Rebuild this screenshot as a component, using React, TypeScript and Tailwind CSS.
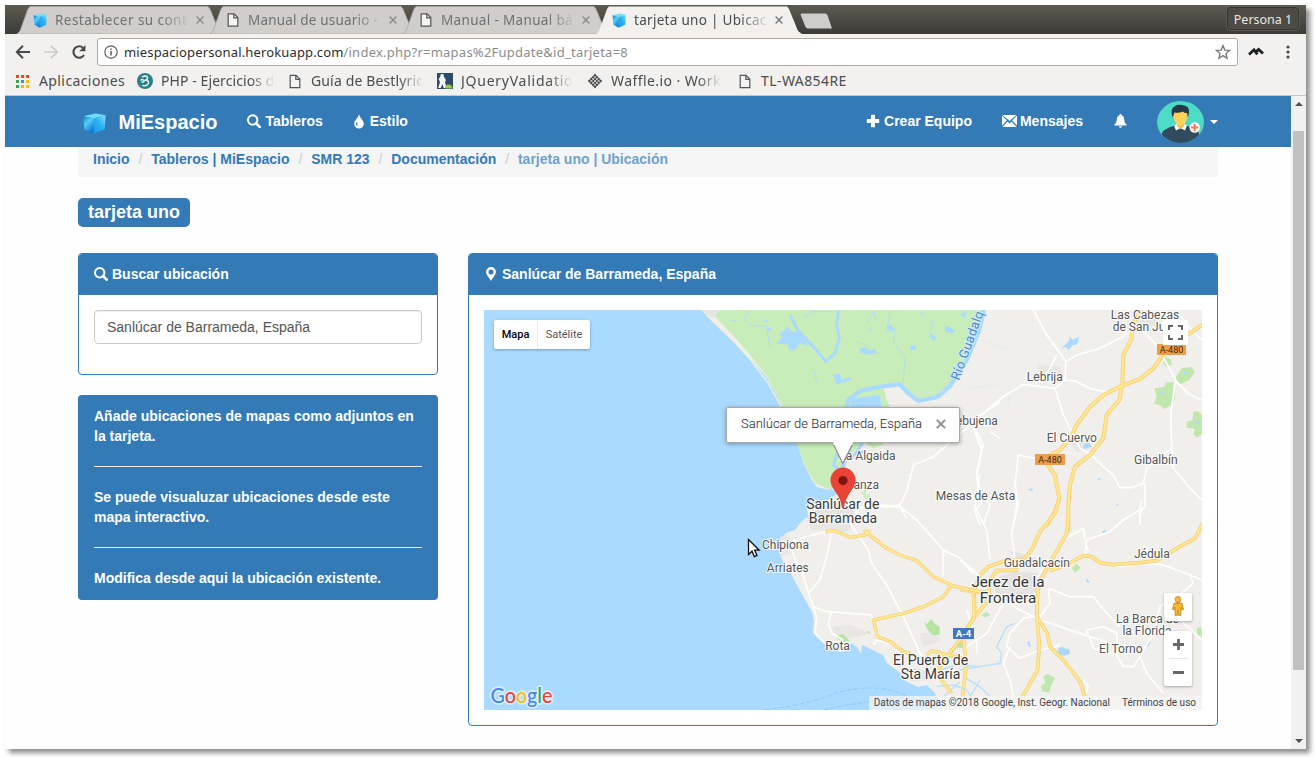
import React from "react";

const SANS = "font-['Liberation_Sans',Arial,sans-serif]";

/* ---------- icons ---------- */

const CubeIcon = ({ className }: { className?: string }) => (
  <svg viewBox="0 0 16 16" preserveAspectRatio="none" className={className}>
    <defs>
      <linearGradient id="cube-left" x1="0" y1="0" x2="0.6" y2="1">
        <stop offset="0" stopColor="#1d74cf" />
        <stop offset="0.45" stopColor="#4fd0f7" />
        <stop offset="1" stopColor="#1272d6" />
      </linearGradient>
      <linearGradient id="cube-right" x1="1" y1="0" x2="0.2" y2="1">
        <stop offset="0" stopColor="#8ae4fc" />
        <stop offset="0.5" stopColor="#2bb3f3" />
        <stop offset="1" stopColor="#1c9df0" />
      </linearGradient>
    </defs>
    <path d="M.6 2.4 9 .4 15.7 1.8 8 4Z" fill="#6fdcfb" />
    <path d="M.6 2.4 8 4 7.8 15.7 1.6 12.6Z" fill="url(#cube-left)" />
    <path d="M8 4 15.7 1.8 15.2 12.4 7.8 15.7Z" fill="url(#cube-right)" />
  </svg>
);

const PageIcon = ({ className }: { className?: string }) => (
  <svg viewBox="0 0 12 14" className={className} fill="none" stroke="#555" strokeWidth="1.2">
    <path d="M1.2.8H7L10.8 4.6V13.2H1.2Z" fill="#f4f4f3" />
    <path d="M6.8.8V4.8H10.8" />
  </svg>
);

const CloseIcon = ({ className }: { className?: string }) => (
  <svg viewBox="0 0 8 8" className={className} stroke="currentColor" strokeWidth="1.4">
    <path d="M.6.6 7.4 7.4M7.4.6.6 7.4" />
  </svg>
);

const SearchIcon = ({ className }: { className?: string }) => (
  <svg viewBox="0 0 14 14" className={className} fill="none" stroke="#fff">
    <circle cx="5.7" cy="5.7" r="4.7" strokeWidth="2" />
    <path d="M9 9 12.7 12.7" strokeWidth="2.6" strokeLinecap="round" />
  </svg>
);

const TintIcon = () => (
  <svg viewBox="0 0 12 15" className="h-[15px] w-3">
    <path d="M6 .3C6.8 4 10.8 6.2 10.8 9.8A4.8 4.8 0 0 1 1.2 9.8C1.2 6.2 5.3 4 6 .3Z" fill="#fff" />
    <path d="M3.2 8.6C2.6 10.6 3.6 12 5.2 12.2 4 11.2 4.2 9.8 4.6 8.2Z" fill="#337ab7" />
  </svg>
);

const PlusIcon = () => (
  <svg viewBox="0 0 14 14" className="h-3.5 w-3.5">
    <path d="M5 .8H9V5H13.2V9H9V13.2H5V9H.8V5H5Z" fill="#fff" />
  </svg>
);

const MailIcon = () => (
  <svg viewBox="0 0 15 12" className="h-3 w-[15px]" fill="#fff">
    <path d="M.6 0H14.4L7.5 6Z" />
    <path d="M0 .6 4.8 5.4 0 10.6ZM15 .6 10.2 5.4 15 10.6Z" />
    <path d="M.4 12 5.5 6.6 7.5 8.4 9.5 6.6 14.6 12Z" />
  </svg>
);

const BellIcon = () => (
  <svg viewBox="0 0 13 14" className="h-3.5 w-[13px]" fill="#fff">
    <path d="M6.5 0C7.2 0 7.6.5 7.6 1.2 9.6 1.8 10 3.6 10.2 5.6 10.4 8 11 9.4 12.6 10.6V11.6H.4V10.6C2 9.4 2.6 8 2.8 5.6 3 3.6 3.4 1.8 5.4 1.2 5.4.5 5.8 0 6.5 0Z" />
    <path d="M5 12.2H8A1.5 1.5 0 0 1 5 12.2Z" />
  </svg>
);

const MarkerIcon = () => (
  <svg viewBox="0 0 10 14" className="h-3.5 w-2.5">
    <path
      d="M5 0A4.9 4.9 0 0 1 9.9 4.9C9.9 7.8 6.8 10 5 14 3.2 10 .1 7.8.1 4.9A4.9 4.9 0 0 1 5 0ZM5 2.4A2.5 2.5 0 1 0 5 7.4 2.5 2.5 0 0 0 5 2.4Z"
      fill="#fff"
      fillRule="evenodd"
    />
  </svg>
);

const Avatar = () => (
  <svg viewBox="0 0 47 42" className="h-[42px] w-[47px]">
    <defs>
      <clipPath id="avatar-clip">
        <ellipse cx="23.5" cy="21" rx="23.5" ry="21" />
      </clipPath>
    </defs>
    <g clipPath="url(#avatar-clip)">
      <rect width="47" height="42" fill="#4cdbc4" />
      <path d="M5 42V32Q6 28 18 24.5L23.5 28 29 24.5Q41 28 42 32V42Z" fill="#324a5e" />
      <path d="M17 24.5 20 22.5H27L30 24.5 28 29.5 23.5 27 19 29.5Z" fill="#fff" />
      <path d="M20 20H27V25L23.5 28 20 25Z" fill="#fdb62f" />
      <path d="M16.8 11Q23 12 26 9L30.2 12V17Q29 23 23.5 25.5 18 23 16.8 17Z" fill="#ffd05b" />
      <path d="M15.5 16.5Q12.5 7.5 18 5 20 3.4 25 4 32.5 4.5 32 11 31.5 14 31 16.5L30 12Q27.5 12.5 26 10.5 22 12.5 17.5 11.5Z" fill="#263a4c" />
    </g>
    <circle cx="37.7" cy="26.5" r="5.2" fill="#fff" />
    <path d="M37.7 22.8V30.2M34 26.5H41.4" stroke="#ff7058" strokeWidth="1.9" />
  </svg>
);

/* ---------- browser chrome ---------- */

const TABS = [
  { title: "Restablecer su cont", cube: true, active: false, track: "tracking-[0.45px]" },
  { title: "Manual de usuario -", cube: false, active: false, track: "tracking-[0.18px]" },
  { title: "Manual - Manual bá", cube: false, active: false, track: "tracking-[0.34px]" },
  { title: "tarjeta uno | Ubicac", cube: true, active: true, track: "tracking-[0.3px]" },
];

const Tab = ({ tab }: { tab: (typeof TABS)[number] }) => (
  <div className={"relative -mr-[13px] flex h-[28px] w-[206px] shrink-0 items-center pl-[15px] " + (tab.active ? "z-10" : "")}>
    <svg viewBox="0 0 206 28" className="absolute inset-0 h-[28px] w-[206px]">
      <path
        d="M0 28 3 25 11 3 13 .5H191L193 3 202 25 206 28Z"
        fill={tab.active ? "#f2f1f0" : "#d0cecc"}
        stroke={tab.active ? "none" : "#a9a7a4"}
        strokeWidth=".8"
      />
    </svg>
    <div className="relative flex w-4 justify-center">
      {tab.cube ? <CubeIcon className="mr-px h-[15px] w-[14px]" /> : <PageIcon className="h-[14px] w-3" />}
    </div>
    <div
      className={
        "relative ml-[7px] w-[136px] overflow-hidden whitespace-nowrap font-['Noto_Sans',sans-serif] text-[13.5px] leading-5 [mask-image:linear-gradient(to_right,black_78%,transparent_100%)] " +
        tab.track +
        (tab.active ? " text-[#4c4c4c]" : " text-[#717070]")
      }
    >
      {tab.title}
    </div>
    <CloseIcon className={"relative ml-[5px] h-2 w-2 " + (tab.active ? "text-[#777]" : "text-[#8d8c8b]")} />
  </div>
);

const TabStrip = () => (
  <div className="flex h-[29px] items-end bg-gradient-to-b from-[#5d5b51] to-[#3c3b37] pl-3">
    {TABS.map((t) => (
      <Tab key={t.title} tab={t} />
    ))}
    <svg viewBox="0 0 34 16" className="mb-[5px] ml-[10px] h-4 w-[34px] self-end">
      <path d="M2.5.6H26Q28 .6 28.6 2.4L33 15.4H8.5Q7 15.4 6.3 13.6L1.6 1.6Q1.6.6 2.5.6Z" fill="#cfcdcb" />
    </svg>
    <div className="ml-auto mr-[7px] mt-[2px] flex h-[23px] w-[72px] items-center justify-center self-start rounded-[4px] border border-[#36352f] bg-[#4d4b45] pt-[3px] font-['Noto_Sans',sans-serif] text-[12.5px] text-[#ebe9e4] shadow-[0_0_0_1px_#5c5a52]">
      Persona 1
    </div>
  </div>
);

const AddressBar = () => (
  <div className="flex h-9 items-center bg-[#f2f1f0] pl-[10px]">
    <svg viewBox="0 0 16 16" className="h-4 w-4" fill="none" stroke="#4a4a4a" strokeWidth="2">
      <path d="M15 8H2.4M8 1.8 1.8 8 8 14.2" />
    </svg>
    <svg viewBox="0 0 16 16" className="ml-[12px] h-4 w-4" fill="none" stroke="#cbcac9" strokeWidth="1.7">
      <path d="M1 8H13.6M8 1.8 14.2 8 8 14.2" />
    </svg>
    <svg viewBox="0 0 16 16" className="ml-[12px] h-4 w-4" fill="none" stroke="#4a4a4a" strokeWidth="2.1">
      <path d="M13 11A5.7 5.7 0 1 1 12.2 4" />
      <path d="M14.4 1V7.2H8.2Z" fill="#4a4a4a" stroke="none" />
    </svg>
    <div className="ml-[10px] flex h-7 w-[1141px] items-center rounded-[3px] border border-[#aeacaa] bg-white px-[6px]">
      <svg viewBox="0 0 14 14" className="h-3.5 w-3.5" fill="none" stroke="#5f5f5f" strokeWidth="1.2">
        <circle cx="7" cy="7" r="6.2" />
        <path d="M7 6V10.6M7 3.4V5" strokeWidth="1.5" />
      </svg>
      <div className="ml-[6px] whitespace-nowrap font-['Noto_Sans',sans-serif] text-[13px] leading-5">
        <span className="tracking-[0.14px] text-[#2d2d2d]">miespaciopersonal.herokuapp.com</span>
        <span className="tracking-[0.24px] text-[#8c8c8c]">/index.php?r=mapas%2Fupdate&amp;id_tarjeta=8</span>
      </div>
      <svg viewBox="0 0 16 16" className="ml-auto h-4 w-4" fill="none" stroke="#777" strokeWidth="1.3">
        <path d="M8 1.6 9.8 6.1 14.6 6.4 10.9 9.5 12.1 14.2 8 11.6 3.9 14.2 5.1 9.5 1.4 6.4 6.2 6.1Z" />
      </svg>
    </div>
    <svg viewBox="0 0 16 10" className="ml-[10px] h-[10px] w-4" fill="none" stroke="#1f1f1f" strokeWidth="2.8">
      <path d="M1 7.6 6 2.8 9.4 7.4M8.2 4.6 10.6 2.4 15 6.6" />
    </svg>
    <svg viewBox="0 0 4 14" className="ml-[22px] h-3.5 w-1" fill="#4a4a4a">
      <circle cx="2" cy="2" r="1.6" />
      <circle cx="2" cy="7" r="1.6" />
      <circle cx="2" cy="12" r="1.6" />
    </svg>
  </div>
);

const GRID = ["#ea4335", "#ea4335", "#ea4335", "#34a853", "#4285f4", "#fbbc05", "#34a853", "#fbbc05", "#fbbc05"];

const BookmarksBar = () => (
  <div className="flex h-[26px] items-center border-b border-[#c9c7c5] bg-[#f2f1f0] pb-[3px] font-['Noto_Sans',sans-serif] text-[14px] leading-5 whitespace-nowrap text-[#4c4c4c]">
    <svg viewBox="0 0 13 13" className="ml-[11px] h-[13px] w-[13px]">
      {GRID.map((c, i) => (
        <rect key={i} x={(i % 3) * 5} y={Math.floor(i / 3) * 5} width="3" height="3" fill={c} />
      ))}
    </svg>
    <div className="ml-[10px] w-[88px] tracking-[0.4px]">Aplicaciones</div>
    <svg viewBox="0 0 16 16" className="ml-[10px] h-4 w-4">
      <circle cx="8" cy="8" r="8" fill="#2a8086" />
      <path d="M5 4.2Q9.5 1.8 10.6 4.6 10.8 6.2 8.6 7.2 12.6 7.6 11.2 10.8 9.4 13.6 5 12.4M3.6 7.4Q5 5.8 6.6 7.2 7.8 9.4 4.4 9.2" stroke="#e8f6f6" strokeWidth="1.5" fill="none" />
    </svg>
    <div className="ml-[8px] w-[114px] overflow-hidden tracking-[0.08px] [mask-image:linear-gradient(to_right,black_78%,transparent_100%)]">PHP - Ejercicios d</div>
    <PageIcon className="ml-[14px] h-[15px] w-3" />
    <div className="ml-[10px] w-[113px] overflow-hidden tracking-[0.14px] [mask-image:linear-gradient(to_right,black_78%,transparent_100%)]">Guía de Bestlyric</div>
    <svg viewBox="0 0 16 16" className="ml-[13px] h-4 w-4">
      <rect width="16" height="16" fill="#2c4b66" />
      <path d="M4 1H6.4L7 4 9 7 8 9 9.6 15H6.6L5.6 11 3.6 15H1.2L3 9 1.6 6 3 4Z" fill="#f3f6f8" />
      <path d="M8 15.6Q8 11.4 11.6 11.4 15.4 11.4 15.4 15.6Z" fill="#9acb3c" />
    </svg>
    <div className="ml-[8px] w-[112px] overflow-hidden tracking-[0.75px] [mask-image:linear-gradient(to_right,black_78%,transparent_100%)]">JQueryValidatio</div>
    <svg viewBox="0 0 16 16" className="ml-[14px] h-4 w-4">
      <path d="M8 .8 15.2 8 8 15.2.8 8Z" fill="#444" />
      <path d="M2.6 6.2 9.8 13.4M4.4 4.4 11.6 11.6M6.2 2.6 13.4 9.8M13.4 6.2 6.2 13.4M11.6 4.4 4.4 11.6M9.8 2.6 2.6 9.8" stroke="#f2f1f0" strokeWidth=".8" />
    </svg>
    <div className="ml-[8px] w-[111px] overflow-hidden tracking-[0.42px] [mask-image:linear-gradient(to_right,black_78%,transparent_100%)]">Waffle.io · Work</div>
    <PageIcon className="ml-[17px] h-[15px] w-3" />
    <div className="ml-[10px] tracking-[0.42px]">TL-WA854RE</div>
  </div>
);

/* ---------- page ---------- */

const NavBar = () => (
  <nav className="flex h-[51px] items-center bg-[#337ab7] pl-[77px] text-sm font-bold text-white">
    <CubeIcon className="mt-1 h-[21px] w-6" />
    <span className="ml-[12.5px] mt-px text-[20px] leading-5">MiEspacio</span>
    <div className="mb-px ml-[30px] flex items-center">
      <SearchIcon className="h-[14.5px] w-3.5" />
      <span className="ml-1">Tableros</span>
    </div>
    <div className="mb-px ml-[30px] flex items-center">
      <TintIcon />
      <span className="ml-[5px]">Estilo</span>
    </div>
    <div className="mb-px ml-auto flex items-center">
      <PlusIcon />
      <span className="ml-1">Crear Equipo</span>
    </div>
    <div className="mb-px ml-[30px] flex items-center">
      <MailIcon />
      <span className="ml-[3px]">Mensajes</span>
    </div>
    <div className="mb-px ml-[30.5px]">
      <BellIcon />
    </div>
    <div className="ml-[30.5px] mr-[73px] flex items-center">
      <Avatar />
      <div className="ml-[6px] border-x-4 border-t-4 border-x-transparent border-t-white" />
    </div>
  </nav>
);

const CRUMBS = ["Inicio", "Tableros | MiEspacio", "SMR 123", "Documentación"];

const Breadcrumb = () => (
  <div className="flex h-[30px] rounded-b-[4px] bg-[#f5f5f5] pl-[15px] pt-[2px] text-sm leading-5 font-bold text-[#337ab7]">
    {CRUMBS.map((c) => (
      <div key={c} className="flex">
        <span>{c}</span>
        <span className="w-[21.7px] pl-[9px] font-normal text-[#ccc]">/</span>
      </div>
    ))}
    <span className="text-[#6fa2cd]">tarjeta uno | Ubicación</span>
  </div>
);

const PanelHead = ({ icon, title }: { icon: React.ReactNode; title: string }) => (
  <div className="flex h-[41px] items-center bg-[#337ab7] pb-[2px] pl-[15px] text-sm font-bold text-white">
    <div className="flex w-[14px] justify-center">{icon}</div>
    <span className="ml-1">{title}</span>
  </div>
);

/* ---------- map ---------- */

type Label = { x: number; y: number; t: string; s?: number; c?: string };

const LABELS: Label[] = [
  { x: 1145, y: 319, t: "Las Cabezas" },
  { x: 1139, y: 331, t: "de San Ju" },
  { x: 1044.8, y: 381, t: "Lebrija" },
  { x: 971.5, y: 425, t: "Trebujena" },
  { x: 1071.8, y: 442, t: "El Cuervo" },
  { x: 1155.8, y: 464, t: "Gibalbín" },
  { x: 867.5, y: 460, t: "La Algaida" },
  { x: 855.8, y: 489, t: "Bonanza" },
  { x: 975.5, y: 500, t: "Mesas de Asta" },
  { x: 785.5, y: 549, t: "Chipiona" },
  { x: 787.8, y: 572, t: "Arriates" },
  { x: 1036.8, y: 567, t: "Guadalcacín" },
  { x: 1151.8, y: 558, t: "Jédula" },
  { x: 837.5, y: 650, t: "Rota" },
  { x: 1147.5, y: 623, t: "La Barca de" },
  { x: 1147, y: 635, t: "la Florida" },
  { x: 1120.8, y: 653, t: "El Torno" },
  { x: 842.8, y: 509, t: "Sanlúcar de", s: 14, c: "#3a3a3a" },
  { x: 843, y: 523, t: "Barrameda", s: 14, c: "#3a3a3a" },
  { x: 1008, y: 587, t: "Jerez de la", s: 15.2, c: "#333" },
  { x: 1008, y: 603, t: "Frontera", s: 15.2, c: "#333" },
  { x: 930.5, y: 665, t: "El Puerto de", s: 14, c: "#3a3a3a" },
  { x: 930.5, y: 679, t: "Sta María", s: 14, c: "#3a3a3a" },
];

/* Local roads and main roads; each group keeps its own tile origin at 1/3 scale. */
const LOCAL_NORTH =
  "M220 15 260 90 300 145 318 170 315 225 285 250 240 245 190 238 130 275 75 320 0 370M318 170 350 150 420 130 480 100 540 60M315 225 345 228 390 250 440 262 490 250M285 250 310 330 340 390 360 430 395 450 430 485 460 510 480 548 515 548 550 535 560 490 600 455 635 430 632 330 645 230M545 75 590 120 650 230 690 270 725 285M660 30 690 70 725 105M40 370 65 430 50 520 65 590 45 620 60 660M225 460 175 450 165 540 175 600 160 660M555 535 555 600 540 625 540 660M635 430 640 490 690 550 725 585M290 150 270 190 240 230";
const LOCAL_SOUTH =
  "M60 -75 45 20 80 90 90 180M165 -60 170 20 155 100 165 185M545 0 540 30 490 60 450 95 380 120 375 160M375 120 370 85 310 120M375 125 385 155M425 185 480 200 550 190 610 195 690 225 725 240M690 225 700 250 670 275 600 320 580 400 540 470 520 500 490 500 470 465 400 445 380 390 430 380 470 400 475 460M265 265 330 290 400 290 440 340 480 380M0 180 40 220M230 170 250 200 230 240M130 300 180 330 240 360 330 390 450 430M240 345 190 355 150 400 140 440 180 475 240 450 290 440 300 430M150 440 130 490 150 540 160 590M130 310 80 400 20 440 0 480M265 265 270 310 240 350M540 470 560 520 610 580M610 340 650 350 725 420M370 540 385 560 375 590M20 330 50 430 50 460";
const LOCAL_WEST =
  "M325 60 350 100 385 150 395 190 440 255 490 350 540 460 560 490M275 90 265 150 240 240 205 280 220 320 260 335 395 345 400 370M275 335 265 370 275 400 310 420M150 125 165 180 190 225 205 280M150 125 200 110 270 92M220 320 230 350 225 400 255 430M345 40 380 10 430 20 480 20 530 60 610 150 660 175 720 230M610 150 610 230M395 20 420 0M400 435 410 420 470 435 500 470";
const MAIN_NORTH = [
  "M545 15 517 60 515 100 490 150 487 240 478 285 440 330 430 400 390 450 345 485 330 540 325 600 325 680",
  "M728 58 650 112 605 155 580 190 540 222 487 242 430 270 390 305 350 360 330 400 300 435 270 450 262 478 285 510 290 540 298 580 285 620 258 664",
];
const MAIN_SOUTH = [
  "M325 60 320 100 295 145 268 190 235 255 230 330 233 380 238 430 233 510 205 560 190 585 185 632",
  "M298 -5 285 40 240 95 215 150 190 178 130 184 85 200 60 225 42 275 45 350",
  "M175 210 110 212 90 240 85 300 40 355 0 420 -60 500",
  "M268 212 320 195 370 167 395 170 420 188 460 194 540 188 590 182 650 145 705 115 728 70",
  "M230 350 262 400 270 440 310 480 360 545 375 590",
  "M0 268 40 275 90 278",
  "M10 400 18 500 8 590",
];
const MAIN_WEST = [
  "M255 95 285 92 330 112 375 105 390 90M372 90 395 110 440 145 480 165 530 182 580 230 640 258 720 275",
  "M633 258 610 290 550 320 490 340 400 360 412 410 450 425 490 455 520 465",
  "M700 275 702 355 660 420 625 465 597 500 605 540 635 580",
  "M560 465 575 452 625 465 670 475M625 465 600 465",
];

const MapArt = () => (
  <svg viewBox="484 310 718 400" className="block h-[400px] w-[718px]">
    <rect x="484" y="310" width="718" height="400" fill="#f0efeb" />
    <path
      d="M484 310H701L710 318 720 328 733 340 750 358 767 378 778 397 783 408 797 442 803 462 812 480 817 487 828 490 840 484 846 490 834 496 828 500 815 504 807 508 808 517 802 521 795 530 786 533 781 539 779 550 782 560 790 572 798 587 807 603 812 612 814 620 813 633 823 642 830 648 840 652 848 650 851 643 857 647 861 654 862 645 873 650 883 655 887 663 900 673 905 681 918 687 927 685 935 693 940 710H484Z"
      fill="#aadaff"
    />
    <g transform="translate(700 305) scale(.33333)">
      <path
        d="M55 15H850L838 70 800 150 745 240 705 280 655 292 625 270 600 240 552 250 558 280 572 310 545 400 550 418 520 430 490 410 460 440 440 470 420 540 385 553 345 535 310 470 285 400 245 295 205 220 150 150 100 92 45 35Z"
        fill="#c8edb9"
      />
      <path d="M8 15H60L40 40 20 28Z" fill="#e6e4e0" />
      <path d="M20 30 60 70 100 108 150 162 205 235 245 308" stroke="#f5f0d2" strokeWidth="4" fill="none" />
      <path d="M240 85 265 65 272 78 300 84 318 104 322 122 300 115 288 132 270 138 262 116 228 116 244 100Z" fill="#aadaff" />
      <path d="M478 130 500 128 510 138 525 130 530 145 500 150 480 142ZM400 210 420 205 425 225 450 215 455 225 410 238ZM780 30 800 15 795 40ZM735 60 765 75 760 85 735 80ZM690 85 710 98 700 110ZM630 122 648 118 648 134 632 134ZM455 280 500 275 540 270 545 310H450Z" fill="#aadaff" />
      <path d="M570 80 560 62 574 58 580 74ZM190 42 205 46 200 54ZM205 68 214 66 210 82 202 76ZM660 25 672 22 670 30ZM505 75 512 65 514 76Z" fill="#aadaff" />
      <path d="M150 15 130 40 150 60 200 65M200 65 210 130M585 70 580 110 615 160 610 230M500 60 520 20M470 110 500 120M570 20 560 80 585 70M520 15 530 50M340 190 350 230M700 40 690 100M90 45 115 50M310 40 340 20 400 20" stroke="#aadaff" strokeWidth="2.5" fill="none" />
      <path d="M270 30 292 75 340 125 378 170 405 145 418 100 410 60 415 15" stroke="#aadaff" strokeWidth="9" fill="none" />
      <path d="M852 15 836 80 800 165 750 243 712 276 655 288 622 262 600 238 540 245 480 258 445 285 440 315M455 405 440 450 430 480 420 550" stroke="#aadaff" strokeWidth="13" fill="none" strokeLinejoin="round" />
      <path d="M490 410 470 440 455 460 410 450 400 480 455 520M470 440 490 440" stroke="#aadaff" strokeWidth="9" fill="none" />
      <path d="M485 560 500 580 510 565M495 580V555" stroke="#c8edb9" strokeWidth="6" fill="none" />
      <path d="M640 265 740 260M800 250 890 240M600 500 640 505" stroke="#d8e6ee" strokeWidth="1.5" fill="none" />
      <path d="M370 590 450 600 480 640 440 680 360 670 320 640Z" fill="#e6e4e1" />
      <path d="M900 290 850 325 830 345 700 455 640 480 620 560 600 600 560 605M830 380 850 420 830 500 840 560 870 600 850 660M870 380 900 400M450 610 540 600 600 605 620 640" stroke="#fff" strokeWidth="5" fill="none" />
    </g>
    <g transform="translate(960 305) scale(.33333)" fill="none" strokeLinejoin="round">
      <path d="M230 180 300 185 310 220 280 240 240 210ZM530 30 580 25 590 60 540 70ZM330 410 370 400 400 430 350 440Z" fill="#e8e6e3" />
      <path d="M305 130 325 110 330 95 338 104 358 95 352 118 338 120 325 136 318 126ZM372 418 385 408 395 425 370 432Z" fill="#aadaff" />
      <path d="M583 250 612 246 620 232 648 232 640 256 645 280 636 300 612 312 600 300 582 296 590 275ZM645 220 665 190 695 186 704 200 688 226 660 238ZM615 155 632 162 636 178 622 186 610 178ZM680 350 698 345 700 320 712 318 728 332V385L712 398 700 388 704 372 680 368Z" fill="#c0e8ae" />
      <path d="M600 265 608 262M672 205 682 203M705 355 718 350M208 553 218 555M415 520 420 525M470 598 475 600" stroke="#aadaff" strokeWidth="6" />
      <path d="M20 90 150 135M150 230 145 300" stroke="#dce8ef" strokeWidth="2" />
      <path d={LOCAL_NORTH} stroke="#fff" strokeWidth="5" />
      {MAIN_NORTH.map((d) => (
        <path key={d} d={d} stroke="#f5cf6c" strokeWidth="12" />
      ))}
      {MAIN_NORTH.map((d) => (
        <path key={d} d={d} stroke="#ffe795" strokeWidth="7" />
      ))}
    </g>
    <g transform="translate(960 500) scale(.33333)" fill="none" strokeLinejoin="round">
      <path d="M95 240 160 215 240 220 250 260 190 300 110 285ZM140 150 200 200 250 190 200 165Z" fill="#e4e3e2" />
      <path d="M292 462 296 444 308 440 316 446 328 446 330 462 312 467Z" fill="#aadaff" />
      <path d="M250 530 262 522 285 534 272 560 268 578 246 574 244 558 256 548ZM335 205 350 190 362 205 345 218ZM65 345 80 335 92 345 75 352ZM710 385 722 380 728 410 712 405Z" fill="#c0e8ae" />
      <path d="M0 510 60 500 120 490 125 460 110 440 140 380 165 370M10 530 60 560 90 590M30 590 60 540" stroke="#b8dffb" strokeWidth="4" />
      <path d="M380 238 386 248M428 98 436 92M205 425 210 440M560 440 570 425" stroke="#aadaff" strokeWidth="6" />
      <path d={LOCAL_SOUTH} stroke="#fff" strokeWidth="5" />
      {MAIN_SOUTH.map((d) => (
        <path key={d} d={d} stroke="#f5cf6c" strokeWidth="11" />
      ))}
      {MAIN_SOUTH.map((d) => (
        <path key={d} d={d} stroke="#ffe795" strokeWidth="6.5" />
      ))}
    </g>
    <g transform="translate(740 500) scale(.33333)" fill="none" strokeLinejoin="round">
      <path d="M200 60 290 50 350 70 280 90 215 90ZM120 110 150 110 150 160 125 170ZM270 380 330 375 395 400 350 410 310 425ZM540 400 590 395 600 425 550 440ZM480 500 560 510 580 540 510 545Z" fill="#e8e7e4" />
      <path d="M553 365 562 372 574 356 582 368 600 382 598 404 578 406 562 388ZM285 408 310 402 330 425 300 422ZM640 440 665 425 668 445ZM380 395 388 392 388 402Z" fill="#b5e5a0" />
      <path d="M75 630Q200 615 290 578 420 545 500 590M250 630Q380 600 480 600" stroke="#8fc3ef" strokeWidth="2.5" strokeDasharray="14 7" />
      <path d="M600 510 650 495 720 500M590 560 640 555 680 570 700 600M610 590 660 545" stroke="#b8dffb" strokeWidth="4" />
      <path d={LOCAL_WEST} stroke="#fff" strokeWidth="5" />
      {MAIN_WEST.map((d) => (
        <path key={d} d={d} stroke="#f5cf6c" strokeWidth="10" />
      ))}
      {MAIN_WEST.map((d) => (
        <path key={d} d={d} stroke="#ffe795" strokeWidth="6" />
      ))}
    </g>
    <g className="font-['Roboto',sans-serif]" textAnchor="middle">
      {LABELS.map((l) => (
        <text key={l.t} x={l.x} y={l.y} fontSize={l.s ?? 12} fill={l.c ?? "#555"} stroke="#fff" strokeWidth="2.2" strokeOpacity=".85" paintOrder="stroke">
          {l.t}
        </text>
      ))}
      <text fontSize="13" letterSpacing=".25" fill="#4a86d0" stroke="#d5ecfb" strokeWidth="1.6" paintOrder="stroke" textAnchor="start" transform="translate(959 381) rotate(-70)">
        Río Guadalq
      </text>
      <rect x="1157" y="344" width="29" height="11" fill="#ef9d4b" />
      <rect x="1035" y="454" width="30" height="11" fill="#ef9d4b" />
      <rect x="953" y="628" width="21" height="11" fill="#3b78c8" />
      <text x="1171.5" y="353" fontSize="9" fill="#3b2b1a">A-480</text>
      <text x="1050" y="462.5" fontSize="9" fill="#3b2b1a">A-480</text>
      <text x="963.5" y="637" fontSize="9.5" fontWeight="700" fill="#fff">A-4</text>
    </g>
    <text x="490.5" y="703" fontSize="21" textLength="62" lengthAdjust="spacingAndGlyphs" className="font-['Lato',sans-serif]" fontWeight="500" stroke="#fff" strokeOpacity=".55" strokeWidth="3.5" strokeLinejoin="round" paintOrder="stroke">
      <tspan fill="#4285f4">G</tspan>
      <tspan fill="#ea4335">o</tspan>
      <tspan fill="#fbbc05">o</tspan>
      <tspan fill="#4285f4">g</tspan>
      <tspan fill="#34a853">l</tspan>
      <tspan fill="#ea4335">e</tspan>
    </text>
  </svg>
);

const MapView = () => (
  <div className="relative h-[400px] w-[718px] overflow-hidden font-['Roboto',sans-serif]">
    <MapArt />

    <div className="absolute left-[10px] top-[10px] flex h-[29px] w-24 items-center rounded-[2px] bg-white text-[11px] shadow-[0_1px_3px_rgba(0,0,0,0.3)]">
      <div className="flex h-full w-11 items-center justify-center border-r border-[#e8e8e8] pt-px font-medium text-black">Mapa</div>
      <div className="flex-1 pt-px text-center text-[#565656]">Satélite</div>
    </div>

    <div className="absolute left-[679px] top-[10px] flex h-[25px] w-[25px] items-center justify-center bg-white">
      <svg viewBox="0 0 15 15" className="h-[15px] w-[15px]" fill="none" stroke="#666" strokeWidth="2">
        <path d="M1 5V1H5M10 1H14V5M14 10V14H10M5 14H1V10" />
      </svg>
    </div>

    <svg viewBox="0 0 26 42" className="absolute left-[345.5px] top-[157px] h-[42px] w-[26px]">
      <path d="M13 .5A12.5 12.5 0 0 1 25.5 13C25.5 18 23 21.5 20 25.5 16.5 30.5 14.8 35 13.9 40.5Q13 42.5 12.1 40.5C11.2 35 9.5 30.5 6 25.5 3 21.5 .5 18 .5 13A12.5 12.5 0 0 1 13 .5Z" fill="#ea4335" />
      <circle cx="13" cy="13.5" r="4.6" fill="#7b1712" />
    </svg>

    <div className="absolute left-[242px] top-[97px] flex h-9 w-[234px] items-center rounded-[2px] border border-[#a9a9a9] bg-white pl-[14px] shadow-[0_1px_4px_rgba(0,0,0,0.35)]">
      <span className="whitespace-nowrap pb-[3px] text-[13px] font-light text-[#222]">Sanlúcar de Barrameda, España</span>
      <svg viewBox="0 0 10 10" className="mb-[3px] ml-[14px] h-[10px] w-[10px]" stroke="#8c8c8c" strokeWidth="1.9">
        <path d="M.8.8 9.2 9.2M9.2.8.8 9.2" />
      </svg>
    </div>
    <svg viewBox="0 0 22 24" className="absolute left-[348px] top-[131px] h-6 w-[22px]">
      <path d="M1.5 2 10.7 22.5 20.5 2Z" fill="#fff" />
      <path d="M1.5 3.5 10.7 22.5 20.5 3.5" fill="none" stroke="#8a8a8a" strokeWidth="1.2" />
      <path d="M1.5 0H20.5V4H1.5Z" fill="#fff" />
    </svg>

    <div className="absolute left-[680px] top-[283px] flex h-7 w-7 items-center justify-center rounded-[2px] bg-white pb-[2px] shadow-[0_1px_3px_rgba(0,0,0,0.3)]">
      <svg viewBox="0 0 12 20" className="h-5 w-3" fill="#fbb829" stroke="#b98a3a" strokeWidth=".8">
        <path d="M2 7H10L11.5 13.5 9.8 14 9 11V19.4H6.6L6 14 5.4 19.4H3V11L2.2 14 .5 13.5Z" />
        <circle cx="6" cy="3.4" r="2.9" />
        <path d="M4 6.6H8L6 8.6Z" fill="#e8722a" stroke="none" />
      </svg>
    </div>
    <div className="absolute left-[680px] top-[321px] flex h-[55px] w-7 flex-col items-center rounded-[2px] bg-white shadow-[0_1px_3px_rgba(0,0,0,0.3)]">
      <div className="flex h-7 w-[19px] items-center justify-center border-b border-[#e6e6e6]">
        <svg viewBox="0 0 11 11" className="h-[11px] w-[11px]" stroke="#666" strokeWidth="2.8">
          <path d="M5.5 0V11M0 5.5H11" />
        </svg>
      </div>
      <div className="flex h-[27px] items-center justify-center">
        <svg viewBox="0 0 11 3" className="h-[3px] w-[11px]">
          <rect width="11" height="3" fill="#666" />
        </svg>
      </div>
    </div>

    <div className="absolute bottom-0 right-0 flex h-[14px] items-center gap-[12px] bg-[#f5f5f5]/75 pl-[5px] pr-[6px] text-[10px] leading-[14px] whitespace-nowrap text-[#444]">
      <span>Datos de mapas ©2018 Google, Inst. Geogr. Nacional</span>
      <span>Términos de uso</span>
    </div>

    <svg viewBox="0 0 14 20" className="absolute left-[263px] top-[228px] h-5 w-3.5">
      <path d="M1.5 1.5V16.5L5 13.2 7.4 18.6 10 17.4 7.6 12.2H12.2Z" fill="#fff" stroke="#111" strokeWidth="1.3" />
    </svg>
  </div>
);

const Content = () => (
  <main className="flex flex-col pl-[73px]">
    <div className="w-[1140px]">
      <Breadcrumb />
      <div className="mt-[21px] flex h-[29px] w-28 items-center justify-center rounded-[5px] bg-[#337ab7] text-[18px] font-bold text-white">
        tarjeta uno
      </div>
      <div className="mt-[26px] flex items-start gap-[30px]">
        <div className="flex w-[360px] flex-col gap-5">
          <section className="h-[122px] overflow-hidden rounded-[4px] border border-[#337ab7] bg-white">
            <PanelHead icon={<SearchIcon className="h-3.5 w-3.5" />} title="Buscar ubicación" />
            <div className="p-[15px]">
              <div className="flex h-[34px] items-center rounded-[4px] border border-[#ccc] px-3 text-sm text-[#555] shadow-[inset_0_1px_1px_rgba(0,0,0,0.075)]">
                Sanlúcar de Barrameda, España
              </div>
            </div>
          </section>
          <section className="h-[205px] rounded-[4px] bg-[#337ab7] px-4 pt-[11px] text-sm leading-5 font-bold text-white">
            <p>Añade ubicaciones de mapas como adjuntos en la tarjeta.</p>
            <hr className="my-5 border-[#eee]" />
            <p>Se puede visualuzar ubicaciones desde este mapa interactivo.</p>
            <hr className="my-5 border-[#eee]" />
            <p>Modifica desde aqui la ubicación existente.</p>
          </section>
        </div>
        <section className="h-[473px] w-[750px] overflow-hidden rounded-[4px] border border-[#337ab7] bg-white">
          <PanelHead icon={<MarkerIcon />} title="Sanlúcar de Barrameda, España" />
          <div className="p-[15px]">
            <MapView />
          </div>
        </section>
      </div>
    </div>
  </main>
);

const ScrollBar = () => (
  <div className="flex w-[15px] flex-col items-center bg-[#f1f1f1]">
    <div className="mt-[6px] border-x-4 border-b-4 border-x-transparent border-b-[#505050]" />
    <div className="mt-[25px] h-[539px] w-[11px] bg-[#c1c1c1]" />
    <div className="mb-[6px] mt-auto border-x-4 border-t-4 border-x-transparent border-t-[#505050]" />
  </div>
);

export default function App() {
  return (
    <div className={"h-[758px] w-[1315px] overflow-hidden bg-white pl-[5px] pt-[5px] " + SANS}>
      <div className="flex h-[744px] w-[1301px] flex-col bg-[#fefefe] shadow-[4px_4px_5px_0px_rgba(0,0,0,0.45)]">
        <TabStrip />
        <AddressBar />
        <BookmarksBar />
        <div className="flex h-[653px]">
          <div className="w-[1286px]">
            <NavBar />
            <Content />
          </div>
          <ScrollBar />
        </div>
      </div>
    </div>
  );
}
